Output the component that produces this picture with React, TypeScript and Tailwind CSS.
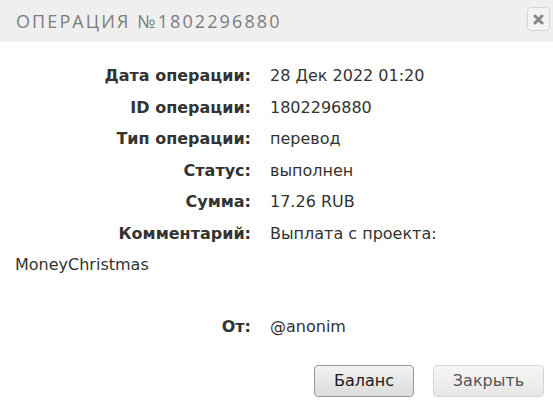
import React from "react";

const rows: [string, string][] = [
  ["Дата операции:", "28 Дек 2022 01:20"],
  ["ID операции:", "1802296880"],
  ["Тип операции:", "перевод"],
  ["Статус:", "выполнен"],
  ["Сумма:", "17.26 RUB"],
];

function Row({ label, value }: { label: string; value: string }) {
  return (
    <div>
      <span className="inline-block w-[236px] text-right font-bold">{label}</span>
      <span className="ml-[19px]">{value}</span>
    </div>
  );
}

export default function App() {
  return (
    <div className="w-[553px] h-[413px] bg-white overflow-hidden font-['DejaVu_Sans',sans-serif]">
      {/* Header */}
      <div className="h-[42px] bg-[#efefef] flex items-center justify-between pl-[16px] pr-[3px]">
        <h2 className="text-[18px] tracking-[2.1px] text-[#7d7d7d] font-['Open_Sans',sans-serif] font-medium">
          ОПЕРАЦИЯ №1802296880
        </h2>
        <button className="w-[23px] h-[24px] mb-[4px] rounded-[4px] border border-[#d6d6d6] bg-[#f3f3f3] flex items-center justify-center">
          <svg width="11" height="11" viewBox="0 0 11 11">
            <path d="M2 2 L9 9 M9 2 L2 9" stroke="#888" strokeWidth="3" strokeLinecap="round" />
          </svg>
        </button>
      </div>

      {/* Body */}
      <div className="px-[15px] pt-[18px] text-[16px] leading-[31.5px] text-[#333]">
        {rows.map(([l, v]) => (
          <Row key={l} label={l} value={v} />
        ))}
        <div>
          <span className="inline-block w-[236px] text-right font-bold">Комментарий:</span>
          <span className="ml-[19px]">Выплата с проекта: </span>
          <br />
          MoneyChristmas
        </div>
        <div className="h-[30px]" />
        <Row label="От:" value="@anonim" />
      </div>

      {/* Footer */}
      <div className="flex justify-end gap-[19px] pr-[9px] pt-[23px]">
        <button className="w-[100px] h-[32px] rounded-[4px] border border-[#999] bg-gradient-to-b from-[#f2f2f2] to-[#dcdcdc] text-[16px] text-[#1a1a1a]">
          Баланс
        </button>
        <button className="w-[111px] h-[32px] rounded-[4px] border border-[#d4d4d4] bg-gradient-to-b from-[#f6f6f6] to-[#e6e6e6] text-[16px] text-[#555]">
          Закрыть
        </button>
      </div>
    </div>
  );
}
